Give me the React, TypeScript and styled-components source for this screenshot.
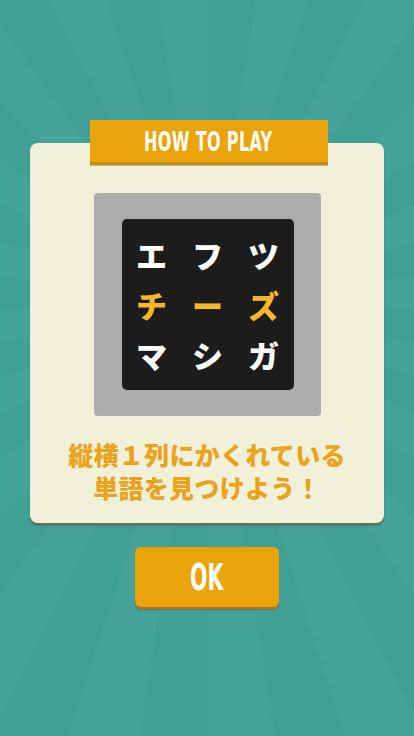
import styled, { createGlobalStyle } from "styled-components";

const GlobalStyle = createGlobalStyle`
    html, body {
        margin: 0;
        padding: 0;
    }
    body {
        font-family: "Noto Sans CJK JP", "Noto Sans", sans-serif;
    }
`;

const letters = [
    { row: ["エ", "フ", "ツ"], hit: false },
    { row: ["チ", "ー", "ズ"], hit: true },
    { row: ["マ", "シ", "ガ"], hit: false },
];

function App() {
    return (
        <Screen>
            <GlobalStyle />
            <Card>
                <Banner>
                    <BannerText>HOW TO PLAY</BannerText>
                </Banner>
                <Frame>
                    <Board>
                        {letters.map(({ row, hit }, i) =>
                            row.map((ch, j) => (
                                <Cell key={`${i}-${j}`} $hit={hit}>
                                    {ch}
                                </Cell>
                            ))
                        )}
                    </Board>
                </Frame>
                <Message>
                    縦横１列にかくれている
                    <br />
                    単語を見つけよう！
                </Message>
            </Card>
            <OkButton>
                <ButtonText>OK</ButtonText>
            </OkButton>
        </Screen>
    );
}

const Screen = styled.main`
    min-height: 736px;
    box-sizing: border-box;
    padding-top: 143px;
    display: flex;
    flex-direction: column;
    align-items: center;
    background-color: #42a096;
    background-image: repeating-conic-gradient(
        from 0deg at 50% 42%,
        #41a095 0deg 9deg,
        #45a399 9deg 18deg
    );
`;

const Card = styled.section`
    width: 354px;
    height: 380px;
    box-sizing: border-box;
    display: flex;
    flex-direction: column;
    align-items: center;
    background: #f1f0d9;
    border-radius: 8px;
    box-shadow: 0 2px 0 #6d6f5e, 0 3px 2px rgba(0, 0, 0, 0.2);
`;

const Banner = styled.header`
    width: 238px;
    height: 42px;
    margin: -23px 0 0 3px;
    display: flex;
    align-items: center;
    justify-content: center;
    background: #eaa40b;
    box-shadow: 0 3px 0 #c88b0f, 0 4px 0 rgba(80, 80, 70, 0.35);
`;

const BannerText = styled.span`
    display: inline-block;
    font-family: "DejaVu Sans Condensed", "DejaVu Sans", sans-serif;
    font-stretch: condensed;
    font-weight: 700;
    font-size: 27px;
    letter-spacing: 0.5px;
    color: #ffffff;
    transform: scaleX(0.66);
`;

const Frame = styled.div`
    margin-top: 31px;
    width: 227px;
    height: 223px;
    box-sizing: border-box;
    padding: 26px 27px 26px 28px;
    background: #acacac;
    border-radius: 4px;
`;

const Board = styled.div`
    width: 172px;
    height: 171px;
    display: grid;
    grid-template-columns: repeat(3, 56px);
    grid-template-rows: repeat(3, 50px);
    justify-content: center;
    align-content: center;
    align-items: center;
    justify-items: center;
    background: #1c1c1c;
    border-radius: 5px;
`;

const Cell = styled.span<{ $hit: boolean }>`
    font-family: "Noto Sans CJK JP", sans-serif;
    font-weight: 900;
    font-size: 31px;
    line-height: 1;
    color: ${(p) => (p.$hit ? "#f5b82a" : "#ffffff")};
`;

const Message = styled.p`
    margin: 22px 0 0;
    font-family: "Noto Sans CJK JP", sans-serif;
    font-weight: 900;
    font-size: 25px;
    letter-spacing: 0.3px;
    line-height: 33px;
    text-align: center;
    color: #eba31c;
`;

const OkButton = styled.button`
    margin-top: 24px;
    width: 144px;
    height: 60px;
    display: flex;
    align-items: center;
    justify-content: center;
    border: none;
    padding: 0;
    background: #eaa40b;
    border-radius: 6px;
    box-shadow: 0 2px 0 #c0701a, 0 3px 1px rgba(60, 50, 30, 0.35);
`;

const ButtonText = styled.span`
    display: inline-block;
    font-family: "DejaVu Sans Condensed", "DejaVu Sans", sans-serif;
    font-stretch: condensed;
    font-weight: 700;
    font-size: 38px;
    color: #ffffff;
    transform: scaleX(0.6);
`;

export default App;
